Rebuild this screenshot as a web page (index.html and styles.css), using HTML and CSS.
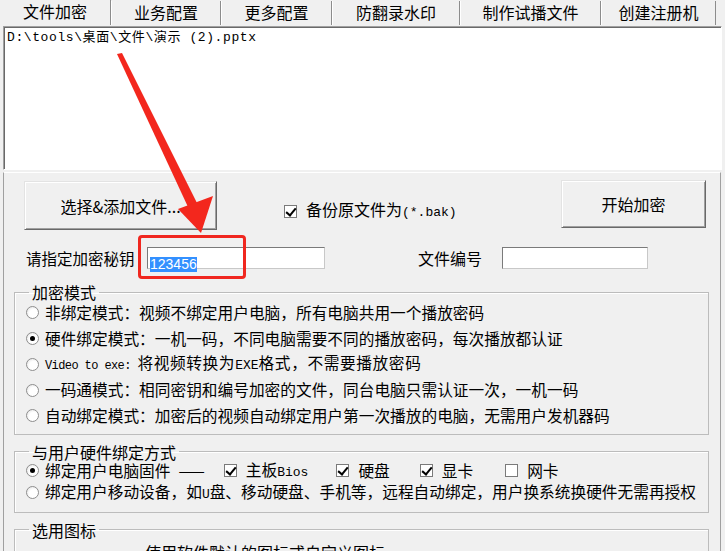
FILE: index.html
```html
<!DOCTYPE html>
<html lang="zh-CN">
<head>
    <meta charset="UTF-8">
    <title>文件加密</title>
    <link rel="stylesheet" href="styles.css">
</head>
<body>
    <div class="tabs">
        <div class="tab active t1">文件加密</div>
        <div class="tab t2">业务配置</div>
        <div class="tab t3">更多配置</div>
        <div class="tab t4">防翻录水印</div>
        <div class="tab t5">制作试播文件</div>
        <div class="tab t6">创建注册机</div>
    </div>

    <div class="filelist mono">D:\tools\桌面\文件\演示 (2).pptx</div>

    <div class="panel">
        <div class="actions">
            <div class="btn btn-add">选择&amp;添加文件...</div>
            <div class="backup">
                <span class="chk on"></span>
                <span>备份原文件为<span class="mono mid">(*.bak)</span></span>
            </div>
            <div class="btn btn-start">开始加密</div>
        </div>

        <div class="keyrow">
            <span class="key-label">请指定加密秘钥</span>
            <div class="field field-key"><span class="selected">123456</span></div>
            <span class="no-label">文件编号</span>
            <div class="field field-no"></div>
        </div>

        <fieldset class="group modes">
            <legend>加密模式</legend>
            <div class="opt"><span class="radio"></span><span>非绑定模式：视频不绑定用户电脑，所有电脑共用一个播放密码</span></div>
            <div class="opt"><span class="radio on"></span><span>硬件绑定模式：一机一码，不同电脑需要不同的播放密码，每次播放都认证</span></div>
            <div class="opt"><span class="radio"></span><span class="loose"><span class="mono small">Video to exe: </span>将视频转换为<span class="mono mid">EXE</span>格式，不需要播放密码</span></div>
            <div class="opt"><span class="radio"></span><span>一码通模式：相同密钥和编号加密的文件，同台电脑只需认证一次，一机一码</span></div>
            <div class="opt"><span class="radio"></span><span>自动绑定模式：加密后的视频自动绑定用户第一次播放的电脑，无需用户发机器码</span></div>
        </fieldset>

        <fieldset class="group bind">
            <legend>与用户硬件绑定方式</legend>
            <div class="opt short">
                <span class="radio on"></span><span>绑定用户电脑固件</span>
                <span class="dash">——</span>
                <span class="hw first"><span class="chk on"></span><span>主板<span class="mono mid">Bios</span></span></span>
                <span class="hw hw2"><span class="chk on"></span><span>硬盘</span></span>
                <span class="hw hw3"><span class="chk on"></span><span>显卡</span></span>
                <span class="hw hw4"><span class="chk"></span><span>网卡</span></span>
            </div>
            <div class="opt short"><span class="radio"></span><span>绑定用户移动设备，如<span class="mono mid">U</span>盘、移动硬盘、手机等，远程自动绑定，用户换系统换硬件无需再授权</span></div>
        </fieldset>

        <fieldset class="group icons">
            <legend>选用图标</legend>
            <div class="iconrow">使用软件默认的图标或自定义图标</div>
        </fieldset>
    </div>

    <!-- annotation drawn over the window -->
    <svg class="arrow" width="725" height="551" viewBox="0 0 725 551">
        <polygon points="117,54 122,53 197,203 188,207" fill="#f3271d"/>
        <polygon points="178,209 213,196 201,233" fill="#f3271d"/>
    </svg>
    <div class="mark"></div>
</body>
</html>
```

FILE: styles.css
```css
* {
    box-sizing: border-box;
}

body {
    margin: 0;
    width: 725px;
    height: 551px;
    overflow: hidden;
    position: relative;
    background: #f0f0f0;
    color: #000;
    font-family: "Noto Sans CJK SC", "Noto Sans", sans-serif;
    font-size: 16px;
}

.mono {
    font-family: "Liberation Mono", "Noto Sans CJK SC", monospace;
}

.small {
    font-size: 12px;
    letter-spacing: -0.6px;
}

.mid {
    font-size: 13px;
    letter-spacing: 0;
}

/* tab strip */
.tabs {
    display: flex;
    align-items: flex-end;
    height: 25px;
}

.tab {
    height: 24px;
    line-height: 22px;
    text-align: center;
    border-left: 1px solid #fff;
    border-right: 1px solid #8c8c8c;
}

.tab.active {
    height: 25px;
    padding-top: 1px;
    line-height: 21px;
    border-left: none;
}

.t1 { width: 111px; }
.t2 { width: 110px; }
.t3 { width: 111px; }
.t4 { width: 128px; }
.t5 { width: 141px; }
.t6 { width: 115px; }

/* file list */
.filelist {
    margin: 1px 3px 0;
    height: 144px;
    padding: 3px;
    background: #fff;
    border: 1px solid;
    border-color: #a0a0a0 #fff #fff #a0a0a0;
    box-shadow: inset 1px 1px #696969;
    font-size: 13px;
    line-height: 16px;
    letter-spacing: 0.6px;
}

/* lower panel */
.panel {
    margin: 2px 4px 0 3px;
    height: 400px;
    padding-top: 7px;
    border-top: 1px solid #fff;
    border-left: 1px solid #a0a0a0;
    border-right: 1px solid #a0a0a0;
}

.actions {
    display: flex;
    align-items: flex-start;
    height: 50px;
}

.btn {
    display: flex;
    align-items: center;
    justify-content: center;
    background: #f0f0f0;
    border: 1px solid;
    border-color: #e3e3e3 #696969 #696969 #e3e3e3;
    box-shadow: inset 1px 1px #fff, inset -1px -1px #a0a0a0;
}

.btn-add {
    width: 193px;
    height: 49px;
    margin: 1px 0 0 20px;
}

.btn-start {
    width: 145px;
    height: 48px;
    margin-left: auto;
    margin-right: 14px;
}

.backup {
    display: flex;
    align-items: center;
    margin: 20px 0 0 67px;
    line-height: 18px;
}

.keyrow {
    display: flex;
    align-items: center;
    height: 23px;
    margin-top: 16px;
}

.key-label {
    width: 121px;
    margin-left: 22px;
    font-size: 15.5px;
}

.no-label {
    margin-left: 93px;
}

.field {
    height: 22px;
    background: #fff;
    border: 1px solid;
    border-color: #7a7a7a #c8c8c8 #c8c8c8 #7a7a7a;
}

.field-key {
    width: 178px;
    padding: 2px;
}

.field-no {
    width: 146px;
    margin-left: 20px;
}

.selected {
    display: inline-block;
    background: #3390ff;
    color: #fff;
    font-family: "Liberation Sans", Arial, sans-serif;
    font-size: 14px;
    line-height: 15px;
}

/* group boxes */
.group {
    min-width: 0;
    margin: 15px 11px 0 10px;
    padding: 0 0 5px 11px;
    border: 1px solid #bcbcbc;
    box-shadow: inset 1px 1px #fff;
}

.group legend {
    margin-left: 3px;
    padding: 0 3px;
    font-size: 16px;
    line-height: 16px;
}

.group.bind {
    margin-top: 9px;
    padding-bottom: 8px;
}

.group.icons {
    margin-top: 9px;
}

.opt {
    display: flex;
    align-items: center;
    height: 25.75px;
    line-height: 20px;
    white-space: nowrap;
    font-size: 15.7px;
}

.opt.short {
    height: 22px;
    line-height: 17px;
}

.loose {
    letter-spacing: 0.6px;
}

.radio {
    flex: none;
    position: relative;
    width: 13px;
    height: 13px;
    margin-right: 6px;
    border-radius: 50%;
    border: 1px solid #8e8e8e;
    background: radial-gradient(circle at 60% 60%, #fff 45%, #dcdcdc);
}

.radio.on::after {
    content: "";
    position: absolute;
    left: 3px;
    top: 3px;
    width: 5px;
    height: 5px;
    border-radius: 50%;
    background: #000;
}

.chk {
    flex: none;
    position: relative;
    display: inline-block;
    width: 13px;
    height: 13px;
    margin-right: 9px;
    background: #fff;
    border: 1px solid #7a7a7a;
}

.chk.on::after {
    content: "";
    position: absolute;
    left: 3px;
    top: 0;
    width: 4px;
    height: 8px;
    border: solid #000;
    border-width: 0 2px 2px 0;
    transform: rotate(40deg);
}

.dash {
    margin-left: 8px;
}

.hw {
    display: flex;
    align-items: center;
}

.hw.first { margin-left: 19px; }
.hw2 { margin-left: 28px; }
.hw3 { margin-left: 30px; }
.hw4 { margin-left: 32px; }

.iconrow {
    padding-left: 119px;
    padding-top: 3px;
    line-height: 22px;
}

/* red annotation */
.arrow {
    position: absolute;
    left: 0;
    top: 0;
    pointer-events: none;
}

.mark {
    position: absolute;
    left: 138px;
    top: 235px;
    width: 108px;
    height: 44px;
    border: 3px solid #f0271f;
    border-radius: 4px;
}
```
